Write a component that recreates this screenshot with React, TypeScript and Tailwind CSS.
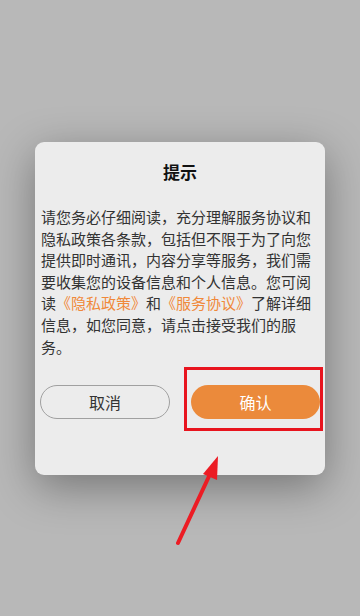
import React from 'react';

const App: React.FC = () => {
  return (
    <div
      className="relative w-[360px] h-[616px] overflow-hidden bg-[#b8b8b8] flex flex-col items-center pt-[142px]"
      style={{ fontFamily: '"Noto Sans CJK SC", "Noto Sans", sans-serif' }}
    >
      <div className="relative w-[290px] h-[333px] rounded-[9px] bg-[#ececec] shadow-[0_12px_44px_rgba(0,0,0,0.36)] flex flex-col">
        <h2 className="mt-[18px] h-6 leading-6 text-center text-[17px] font-bold text-[#111]">提示</h2>
        <p className="mt-[22px] px-[6px] text-[15px] leading-[21.6px] text-[#333]">
          请您务必仔细阅读，充分理解服务协议和隐私政策各条款，包括但不限于为了向您提供即时通讯，内容分享等服务，我们需要收集您的设备信息和个人信息。您可阅读<span className="text-[#f0893a]">《隐私政策》</span>和<span className="text-[#f0893a]">《服务协议》</span>了解详细信息，如您同意，请点击接受我们的服务。
        </p>
        <div className="mt-[28px] flex justify-between px-[5px]">
          <button className="w-[130px] h-[34px] rounded-full border border-[#a0a0a0] text-[16px] text-[#333]">取消</button>
          <button className="w-[129px] h-[34px] rounded-full bg-[#eb8a3b] text-[16px] text-white">确认</button>
        </div>
        {/* annotation box */}
        <div className="absolute left-[149px] top-[225px] w-[139px] h-[64px] border-[3px] border-[#e8141e]" />
      </div>

      {/* arrow annotation */}
      <svg className="absolute left-0 top-0" width="360" height="616" viewBox="0 0 360 616">
        <line x1="178" y1="543" x2="211" y2="472" stroke="#ec1c24" strokeWidth="4" strokeLinecap="round" />
        <polygon points="218,456 203,474 217,480" fill="#ec1c24" />
      </svg>
    </div>
  );
};

export default App;
